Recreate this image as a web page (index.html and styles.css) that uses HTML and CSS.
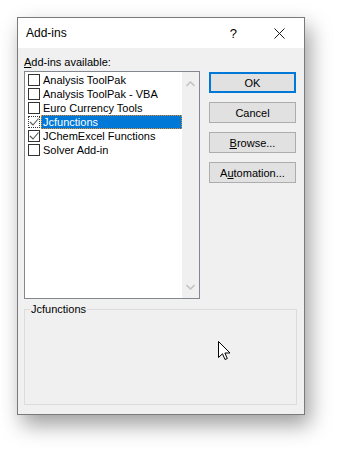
FILE: index.html
```html
<!DOCTYPE html>
<html lang="en">
<head>
  <meta charset="UTF-8" />
  <title>Add-ins</title>
  <link rel="stylesheet" href="styles.css">
</head>
<body>

  <!-- Dialog window -->
  <div class="dialog">
    <div class="titlebar">
      <span class="title">Add-ins</span>
      <span class="help">?</span>
      <svg class="close" width="11" height="11" viewBox="0 0 11 11">
        <path d="M0.5 0.5 L10.5 10.5 M10.5 0.5 L0.5 10.5" stroke="#1a1a1a" stroke-width="1" fill="none"/>
      </svg>
    </div>

    <div class="content">
      <div class="label"><u>A</u>dd-ins available:</div>

      <div class="main">
        <!-- Add-in list -->
        <div class="listbox">
          <ul class="items">
            <li><span class="box"></span><span class="name">Analysis ToolPak</span></li>
            <li><span class="box"></span><span class="name">Analysis ToolPak - VBA</span></li>
            <li><span class="box"></span><span class="name">Euro Currency Tools</span></li>
            <li class="selected">
              <span class="box focus">
                <svg width="10" height="10" viewBox="0 0 10 10"><path d="M1 5 L4 8 L9.5 1.5" stroke="#555" stroke-width="1.1" fill="none"/></svg>
              </span>
              <span class="name">Jcfunctions</span>
            </li>
            <li>
              <span class="box">
                <svg width="10" height="10" viewBox="0 0 10 10"><path d="M1 5 L4 8 L9.5 1.5" stroke="#555" stroke-width="1.1" fill="none"/></svg>
              </span>
              <span class="name">JChemExcel Functions</span>
            </li>
            <li><span class="box"></span><span class="name">Solver Add-in</span></li>
          </ul>
          <div class="scrollbar">
            <svg width="9" height="6" viewBox="0 0 9 6"><path d="M0.5 5 L4.5 1 L8.5 5" stroke="#c4c4c4" stroke-width="1.6" fill="none"/></svg>
            <svg width="9" height="6" viewBox="0 0 9 6"><path d="M0.5 1 L4.5 5 L8.5 1" stroke="#c4c4c4" stroke-width="1.6" fill="none"/></svg>
          </div>
        </div>

        <!-- Buttons -->
        <div class="buttons">
          <button class="btn default">OK</button>
          <button class="btn">Cancel</button>
          <button class="btn"><u>B</u>rowse...</button>
          <button class="btn">A<u>u</u>tomation...</button>
        </div>
      </div>

      <fieldset class="group">
        <legend>Jcfunctions</legend>
        <div class="description"></div>
      </fieldset>
    </div>
  </div>

  <!-- Mouse pointer -->
  <svg class="cursor" width="13" height="20" viewBox="0 0 13 20">
    <path d="M0.5 0.5 L0.5 16.5 L4.5 12.8 L7 18.5 L9.3 17.5 L6.9 12 L12 12 Z" fill="#fff" stroke="#000" stroke-width="1"/>
  </svg>

</body>
</html>
```

FILE: styles.css
```css
* {
  margin: 0;
  padding: 0;
  box-sizing: border-box;
}

body {
  font-family: 'Liberation Sans', Arial, sans-serif;
  font-size: 11px;
  background-color: #fff;
  color: #000;
  width: 352px;
  height: 463px;
  position: relative;
}

.dialog {
  margin: 17px 0 0 17px;
  width: 288px;
  border: 1px solid #7a7a7a;
  background-color: #f0f0f0;
  box-shadow: 5px 10px 20px rgba(0, 0, 0, 0.38);
}

.titlebar {
  height: 30px;
  background-color: #fff;
  display: flex;
  align-items: center;
  padding: 0 0 0 8px;
}

.title {
  flex: 1;
  font-size: 12px;
}

.help {
  font-size: 13px;
  margin-right: 37px;
}

.close {
  margin-right: 19px;
}

.content {
  padding: 6px 7px 9px 6px;
}

.label {
  line-height: 16px;
  margin-bottom: 1px;
}

.main {
  display: flex;
  gap: 9px;
}

.listbox {
  width: 176px;
  height: 228px;
  border: 1px solid #828790;
  background-color: #fff;
  display: flex;
}

.items {
  list-style: none;
  flex: 1;
  padding-top: 1px;
}

.items li {
  height: 14px;
  display: flex;
  align-items: center;
  padding-left: 3px;
}

.box {
  width: 12px;
  height: 12px;
  border: 1px solid #333;
  background-color: #fff;
  display: flex;
  align-items: center;
  justify-content: center;
  margin-right: 1px;
}

.box.focus {
  border-style: dotted;
}

.name {
  line-height: 14px;
  padding: 0 2px;
  white-space: nowrap;
}

.selected .name {
  flex: 1;
  background-color: #0078d7;
  color: #fff;
  outline: 1px dotted #f08c1a;
  outline-offset: -1px;
}

.scrollbar {
  width: 17px;
  background-color: #f0f0f0;
  display: flex;
  flex-direction: column;
  justify-content: space-between;
  align-items: center;
  padding: 9px 0 8px;
}

.buttons {
  display: flex;
  flex-direction: column;
  gap: 9px;
  padding-top: 1px;
}

.btn {
  width: 87px;
  height: 21px;
  font-family: 'Liberation Sans', Arial, sans-serif;
  font-size: 11px;
  background-color: #e1e1e1;
  border: 1px solid #adadad;
  color: #000;
}

.btn.default {
  border: 2px solid #0078d7;
}

.group {
  margin-top: 3px;
  width: 273px;
  border: 1px solid #dcdcdc;
  padding: 0;
}

.group legend {
  margin-left: 5px;
  padding: 0 1px;
  line-height: 14px;
}

.description {
  height: 88px;
}

.cursor {
  position: absolute;
  left: 218px;
  top: 341px;
}
```
